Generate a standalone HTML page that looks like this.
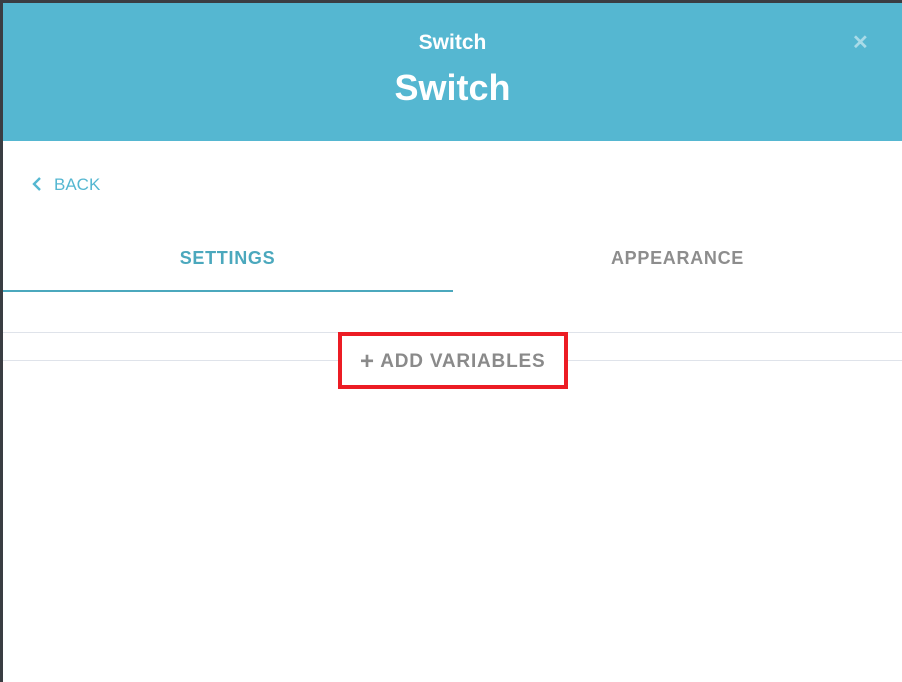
<!DOCTYPE html>
<html><head><meta charset="utf-8"><style>
*{margin:0;padding:0;box-sizing:border-box}
body{width:902px;height:682px;overflow:hidden;background:#3a3d42;font-family:"Liberation Sans",sans-serif;position:relative}
.panel{position:absolute;left:3px;top:3px;right:0;bottom:0;background:#fff}
.hdr{position:absolute;left:0;top:0;right:0;height:138px;background:#55b7d1;color:#fff;text-align:center}
.t1{position:absolute;top:28px;left:0;right:0;font-size:21px;font-weight:bold}
.t2{position:absolute;top:64px;left:0;right:0;font-size:36px;font-weight:bold}
.x{position:absolute;left:849px;top:27px;font-size:20px;color:#a9dbe8;font-weight:bold}
.back{position:absolute;left:29px;top:172px;color:#55b7d1;font-size:17px}
.tab{position:absolute;top:245px;font-size:18px;font-weight:bold;text-align:center;width:449px;letter-spacing:0.7px}
.ul{position:absolute;left:0;top:287px;width:450px;height:2px;background:#4ba8bd}
.line{position:absolute;left:0;right:0;height:1px;background:#dfe3ea}
.red{position:absolute;left:335px;top:329px;width:230px;height:57px;border:4px solid #ec1c24;background:#fff}
.add{position:absolute;left:357px;top:345px;font-size:19px;font-weight:bold;color:#8a8a8a;letter-spacing:0.8px}
</style></head><body>
<div class="panel">
<div class="hdr"><div class="t1">Switch</div><div class="t2">Switch</div><div class="x">✕</div></div>
<div class="back"><svg width="10" height="14" viewBox="0 0 10 14" style="vertical-align:-1px;margin-right:12px"><path d="M8 1L2 7l6 6" stroke="#55b7d1" stroke-width="2.4" fill="none"/></svg>BACK</div>
<div class="tab" style="left:0;color:#4ba8bd">SETTINGS</div>
<div class="tab" style="left:450px;color:#8d8d8d">APPEARANCE</div>
<div class="ul"></div>
<div class="line" style="top:329px"></div>
<div class="line" style="top:357px"></div>
<div class="red"></div>
<div class="add"><span style="font-size:24px;vertical-align:-2px">+</span> ADD VARIABLES</div>
</div>
</body></html>
